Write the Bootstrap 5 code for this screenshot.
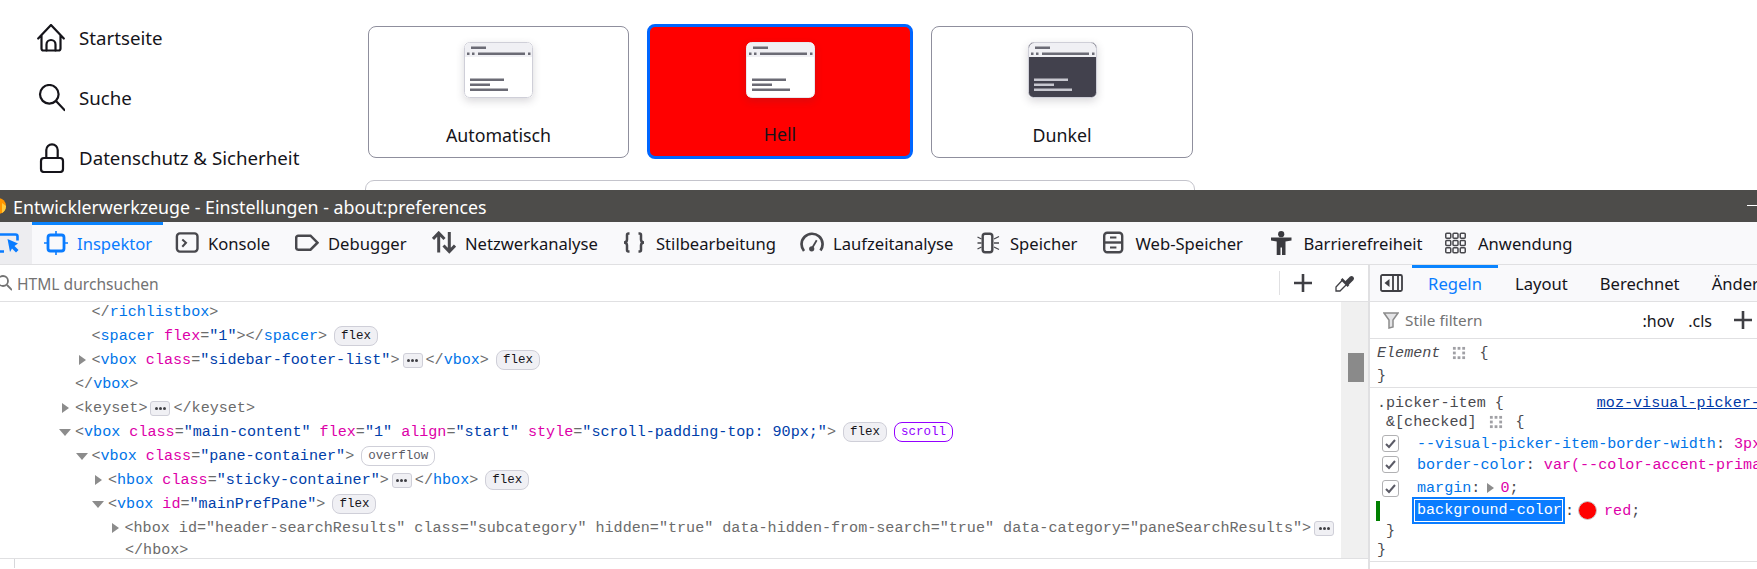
<!DOCTYPE html>
<html lang="de">
<head>
<meta charset="utf-8">
<title>Entwicklerwerkzeuge</title>
<link href="https://cdn.jsdelivr.net/npm/bootstrap@5.3.0/dist/css/bootstrap.min.css" rel="stylesheet">
<style>
html,body{height:569px;overflow:hidden;background:#fff}
body{font-family:"Noto Sans","Open Sans",sans-serif;color:#15141a}
.pref-area{height:190px;overflow:hidden}
.pref-side{width:365px;padding:8px 0 0 37px}
.pref-item{height:60px;gap:14px;font-size:18.700px;line-height:24px}
.pref-ico{width:28px;height:28px;flex:none}
.pref-ico.tall{height:30px}
.pref-main{width:830px}
.pick-row{gap:18px;padding:24px 0 0 3px;height:180px}
.pick-item{width:261px;height:132px;margin-top:2px;border:1px solid #8f8f9d;border-radius:8px;padding-top:15px;font-size:17.800px;background:#fff}
.pick-item.wide{width:262px}
.pick-item.on{width:266px;height:135px;margin-top:0;border:3px solid #0066ff;background:#f00;padding-top:15px}
.pick-item svg{width:69px;height:56px;display:block;border-radius:5px;box-shadow:0 3px 8px rgba(58,57,68,.2)}
.pick-label{margin-top:25px;line-height:24px}
.pick-item.on .pick-label{margin-top:24px}
.pref-next{height:40px;border:1px solid #c4c4cc;border-radius:9px}
.title-bar{height:32px;background:#4d4c4a;color:#fff;font-size:17.800px;padding:2px 0 0 13px;position:relative}
.ff-logo{position:absolute;left:-10px;top:8px;width:16px;height:16px}
.win-min{position:absolute;left:1747px;top:15px;width:10px;height:1px;background:#fff}
.tool-bar{height:43px;background:#f9f9fb;border-bottom:1px solid #e0e0e2;display:grid;grid-template-columns:32px 131px 120px 137px 191px 177px 177px 125.5px 168px 174.5px 150px;font-size:16.600px}
.tool-pick{background:#ededf0;overflow:hidden}
.tool-pick svg{width:24px;height:24px}
.tool-tab{padding-left:12px;gap:9px;color:#15141a;white-space:nowrap}
.tool-tab span{padding-top:2px}
.tool-tab svg{width:24px;height:24px;flex:none;fill:none;stroke:#48484d;stroke-width:2.4}
.tool-tab.on{color:#0a7cff;box-shadow:inset 0 3px 0 #0a84ff}
.tool-tab.on svg{stroke:#0a7cff}
.dev-body{height:304px}
.insp-left{width:1368px}
.search-line{height:37px;border-bottom:1px solid #e0e0e2;font-size:15.600px;color:#737373}
.search-line>span{padding-top:3px}
.search-line .glass{width:14px;height:16px;margin-left:-2px;margin-right:5px;flex:none}
.search-tools{margin-left:auto;height:24px;border-left:1px solid #e0e0e2;padding-left:13px;gap:22px;margin-right:13px}
.search-tools svg{width:20px;height:20px;fill:none;stroke:#3f3f44;stroke-width:2.6}
.mk-wrap{height:257px;border-bottom:1px solid #e0e0e2;overflow:hidden}
.mk-tree{flex:1;min-width:0;overflow:hidden;margin-top:-2px;font:15.100px/24px "Liberation Mono","DejaVu Sans Mono",monospace;color:#6b6b6b}
.mk-row{height:24px;white-space:pre}
.mk-row.cont{height:18px;line-height:18px;margin-top:1px;padding-left:125px}
.lv0{padding-left:59px}.lv1{padding-left:75.5px}.lv2{padding-left:92px}.lv3{padding-left:108.5px}
.tw-slot{width:16px;flex:none;display:flex;align-items:center}
.tw-r{width:0;height:0;border-left:7px solid #8c8c8c;border-top:5.5px solid transparent;border-bottom:5.5px solid transparent;margin-left:3px}
.tw-d{width:0;height:0;border-top:7px solid #8c8c8c;border-left:6px solid transparent;border-right:6px solid transparent}
.c-tag{color:#0074e8}.c-att{color:#dd00a9}.c-val{color:#003eaa}
.in-pill{display:inline-block;height:20px;line-height:18px;font-size:12.5px;padding:0 6px;border:1px solid #cfcfd8;background:#f0f0f4;border-radius:8px;color:#15141a;margin-left:7px}
.in-pill.plain{background:#fff;color:#5b5b66}
.in-pill.scrollp{background:#fff;border-color:#9400ff;color:#9400ff}
.in-more{display:inline-flex;align-items:center;justify-content:center;gap:1px;width:20px;height:15px;border:1px solid #cfcfd8;background:#f0f0f4;border-radius:3px;margin:0 3px}
.in-more i{width:3px;height:3px;border-radius:50%;background:#3f3f44}
.mk-scroll{width:27px;background:#f0f0f0;padding:51px 4px 0 7px;flex:none}
.mk-thumb{height:29px;background:#8a8a8a}
.crumb-line{height:9px;padding-left:14px}
.crumb-line div{width:1px;height:9px;background:#d7d7db}
.rule-pane{width:389px;border-left:2px solid #e0e0e2;overflow:hidden;flex:none}
.side-tabs{height:37px;background:#f9f9fb;border-bottom:1px solid #e0e0e2;font-size:16.600px;white-space:nowrap;overflow:hidden}
.side-toggle{width:23px;height:18px;margin-left:10px;margin-right:9px;flex:none}
.side-tab{height:36px;width:86px;flex:none;justify-content:center;padding-top:2px}
.side-tab.on{color:#0a7cff;box-shadow:inset 0 3px 0 #0a84ff}
.side-rest{margin-left:17px;gap:32px;flex:none;padding-top:2px}
.filter-line{height:37px;border-bottom:1px solid #e0e0e2;font-size:15.300px;color:#737373;padding-left:13px;white-space:nowrap}
.filter-line>svg{width:16px;height:17px;margin-right:6px;flex:none}
.filter-line>span{padding-top:1px}
.filter-btns{margin-left:auto;color:#15141a;font-size:16px;gap:14px;padding-right:4px}
.filter-btns span{padding-top:1px}
.filter-btns svg{width:20px;height:20px;margin-left:7px;fill:none;stroke:#3f3f44;stroke-width:2.6;flex:none}
.rule-code{font:15.100px/20px "Liberation Mono","DejaVu Sans Mono",monospace;color:#4a4a4f}
.rule-code span{white-space:pre}
.r-block{border-bottom:1px solid #e0e0e2;padding-left:7px}
.r-block.first{height:49px;padding-top:2px}
.r-block.first .r-row{height:23px}
.r-block.second{height:174px;padding-top:6px}
.r-row{display:flex;align-items:center;height:20px;white-space:nowrap}
.r-sel{font-style:italic}
.r-link{margin-left:93px;color:#0039a6;text-decoration:underline}
.r-dots{width:14px;height:14px;margin:0 13px 0 12px;flex:none}
.r-chk{width:17px;height:17px;border:1.5px solid #b1b1b3;border-radius:3px;flex:none;margin:0 18px 0 5px;display:flex;align-items:center;justify-content:center}
.r-chk svg{width:11px;height:11px;fill:none;stroke:#5b5b66;stroke-width:2}
.r-prop{color:#0074e8}.r-val{color:#dd00a9}
.r-green{width:4px;height:20px;background:#008000;margin:0 32px 0 -1px;flex:none}
.r-edit{background:#0a7cff;color:#fff;height:27px;width:153px;padding:2px;flex:none}
.r-edit span{display:block;border:1px solid #fff;height:23px;line-height:21px;padding-left:2px}
.r-dot{width:19px;height:19px;border-radius:50%;background:#f00;border:1px solid #ccc;margin:0 7px 0 4px;flex:none}
.ind1{padding-left:9px}
.r-top{height:18px}
.r-check{height:19px}
.r-first-decl{height:21px;margin-top:2px}
.r-mid{height:21px}
.r-margin{height:25px;padding-top:1px}
.r-tw{margin:0 6px 0 -2px}
</style>
</head>
<body class="m-0">
<div class="pref-area d-flex">
  <nav class="pref-side">
    <div class="pref-item d-flex align-items-center">
      <svg class="pref-ico" viewBox="0 0 28 28" fill="none" stroke="#15141a" stroke-width="2.200" stroke-linejoin="round" stroke-linecap="round"><path d="M1.200 14.500 14 1l12.800 13.500M4.500 11v13.500a2 2 0 0 0 2 2h15a2 2 0 0 0 2-2V11"/><path d="M9.500 26.500v-6a4.500 4.500 0 0 1 9 0v6"/></svg>
      <span>Startseite</span>
    </div>
    <div class="pref-item d-flex align-items-center">
      <svg class="pref-ico" viewBox="0 0 28 28" fill="none" stroke="#15141a" stroke-width="2.200" stroke-linecap="round"><circle cx="12.300" cy="10.300" r="9.300"/><path d="m19 17 8.500 9"/></svg>
      <span>Suche</span>
    </div>
    <div class="pref-item d-flex align-items-center">
      <svg class="pref-ico tall" viewBox="0 -1 28 30" fill="none" stroke="#15141a" stroke-width="2.200"><rect x="4" y="14" width="22" height="14" rx="3"/><path d="M9.300 14V6a5.700 5.700 0 0 1 11.400 0v8"/></svg>
      <span>Datenschutz &amp; Sicherheit</span>
    </div>
  </nav>
  <main class="pref-main">
    <div class="pick-row d-flex">
      <div class="pick-item d-flex flex-column align-items-center">
        <svg viewBox="0 0 69 56"><rect x=".5" y=".5" width="68" height="55" rx="5" fill="#fff" stroke="#cfcfd8"/><path d="M1 6a5 5 0 0 1 5-5h57a5 5 0 0 1 5 5v9H1z" fill="#f0f0f4"/><g fill="#6b6b75"><rect x="7" y="4.500" width="15" height="2.500"/><rect x="3" y="10.500" width="2.500" height="2.500"/><rect x="8" y="10.500" width="2.500" height="2.500"/><rect x="14" y="10.500" width="47" height="2.500"/><rect x="64" y="10.500" width="2.500" height="2.500"/><rect x="6" y="36.500" width="34" height="2.500"/><rect x="6" y="41.500" width="20" height="2.500"/><rect x="6" y="46.500" width="38" height="2.500"/></g></svg>
        <div class="pick-label">Automatisch</div>
      </div>
      <div class="pick-item on d-flex flex-column align-items-center">
        <svg viewBox="0 0 69 56"><rect x=".5" y=".5" width="68" height="55" rx="5" fill="#fff" stroke="#e8e8ee"/><path d="M1 6a5 5 0 0 1 5-5h57a5 5 0 0 1 5 5v9H1z" fill="#f0f0f4"/><g fill="#6b6b75"><rect x="7" y="4.500" width="15" height="2.500"/><rect x="3" y="10.500" width="2.500" height="2.500"/><rect x="8" y="10.500" width="2.500" height="2.500"/><rect x="14" y="10.500" width="47" height="2.500"/><rect x="64" y="10.500" width="2.500" height="2.500"/><rect x="6" y="36.500" width="34" height="2.500"/><rect x="6" y="41.500" width="20" height="2.500"/><rect x="6" y="46.500" width="38" height="2.500"/></g></svg>
        <div class="pick-label">Hell</div>
      </div>
      <div class="pick-item wide d-flex flex-column align-items-center">
        <svg viewBox="0 0 69 56"><rect x=".5" y=".5" width="68" height="55" rx="5" fill="#42414d" stroke="#cfcfd8"/><path d="M1 6a5 5 0 0 1 5-5h57a5 5 0 0 1 5 5v9H1z" fill="#f0f0f4"/><g fill="#6b6b75"><rect x="7" y="4.500" width="15" height="2.500"/><rect x="3" y="10.500" width="2.500" height="2.500"/><rect x="8" y="10.500" width="2.500" height="2.500"/><rect x="14" y="10.500" width="47" height="2.500"/><rect x="64" y="10.500" width="2.500" height="2.500"/></g><g fill="#c8c8d0"><rect x="6" y="36.500" width="34" height="2.500"/><rect x="6" y="41.500" width="20" height="2.500"/><rect x="6" y="46.500" width="38" height="2.500"/></g></svg>
        <div class="pick-label">Dunkel</div>
      </div>
    </div>
    <div class="pref-next"></div>
  </main>
</div>

<div class="title-bar d-flex align-items-center">
  <svg class="ff-logo" viewBox="0 0 16 16"><circle cx="8" cy="8" r="8" fill="#ff9500"/><path d="M16 8a8 8 0 0 1-4 7V5z" fill="#ffcb3d"/></svg>
  <span>Entwicklerwerkzeuge - Einstellungen - about:preferences</span>
  <div class="win-min"></div>
</div>

<div class="tool-bar">
  <div class="tool-pick d-flex align-items-center">
    <svg viewBox="0 0 24 24" fill="none" stroke="#0a7cff" stroke-width="2.600"><path d="M0 3.500h15.500a2 2 0 0 1 2 2v4M0 20.500h4"/><path d="M7.500 8 18 12.500 14.500 15l4 4-2.500 2.500-4-4L10 21z" fill="#0a7cff" stroke="none"/></svg>
  </div>
  <div class="tool-tab on d-flex align-items-center"><svg viewBox="0 0 24 24"><rect x="4" y="4" width="16" height="16" rx="2.500" stroke-width="2.800"/><path stroke-width="1.600" d="M12 0v4M12 20v4M0 12h4M20 12h4"/></svg><span>Inspektor</span></div>
  <div class="tool-tab d-flex align-items-center"><svg viewBox="0 0 24 24"><rect x="1.900" y="2.400" width="20.600" height="18.200" rx="3"/><path stroke-width="2" d="m7.300 8.500 3.700 3.300-3.700 4"/></svg><span>Konsole</span></div>
  <div class="tool-tab d-flex align-items-center"><svg viewBox="0 0 24 24"><path stroke-width="2.500" d="M1.200 6.700a2 2 0 0 1 2-2h12.300l7 7-7 7H3.200a2 2 0 0 1-2-2z"/></svg><span>Debugger</span></div>
  <div class="tool-tab d-flex align-items-center"><svg viewBox="0 0 24 24"><path stroke-width="3" d="M6.700 21.500V2M1 8l5.700-6 5.800 6M17.300 1v19M11.500 14.500l5.800 6 5.700-6"/></svg><span>Netzwerkanalyse</span></div>
  <div class="tool-tab d-flex align-items-center"><svg viewBox="0 0 24 24"><path stroke-width="2.500" d="M6.500 2.500h-1A1.500 1.500 0 0 0 4 4v4.500c0 1.500-1 3-3 3 2 0 3 1.500 3 3V19a1.500 1.500 0 0 0 1.500 1.500h1M15.500 2.500h1A1.500 1.500 0 0 1 18 4v4.500c0 1.500 1 3 3 3-2 0-3 1.500-3 3V19a1.500 1.500 0 0 1-1.500 1.500h-1"/></svg><span>Stilbearbeitung</span></div>
  <div class="tool-tab d-flex align-items-center"><svg viewBox="0 0 24 24"><path stroke-width="2.700" d="M4 20a10.500 10.500 0 1 1 16.500-.5"/><path stroke-width="1.800" d="m11.700 17.800 5-8.600"/><circle cx="11.700" cy="17.800" r="2.600" fill="#48484d" stroke="none"/></svg><span>Laufzeitanalyse</span></div>
  <div class="tool-tab d-flex align-items-center"><svg viewBox="0 0 24 24"><rect x="5.700" y="2.700" width="9.600" height="18.600" rx="2.500"/><path stroke-width="1.300" d="m.5 6 4 2M.5 12h4M.5 18l4-2M17 8l5-2.500M17 12h5M17 16l5 2.500"/></svg><span>Speicher</span></div>
  <div class="tool-tab d-flex align-items-center"><svg viewBox="0 0 24 24"><rect x="1.200" y="1.700" width="18" height="19.600" rx="3"/><path d="M1.200 11.500h18"/><path stroke-width="1.800" d="M7 6.500h6.400M7 16.500h6.400"/></svg><span>Web-Speicher</span></div>
  <div class="tool-tab d-flex align-items-center"><svg viewBox="0 0 24 24"><circle cx="10.200" cy="3.200" r="3.100" fill="#3a3a3f" stroke="none"/><path d="M0 6.500h20.500v3l-6 1V24H11v-7.500H9.500V24H5.700V10.500L0 9.500z" fill="#3a3a3f" stroke="none"/></svg><span>Barrierefreiheit</span></div>
  <div class="tool-tab d-flex align-items-center"><svg viewBox="0 0 24 24"><g stroke-width="1.500"><rect x=".75" y="2.250" width="5" height="5" rx="1"/><rect x="8" y="2.250" width="5" height="5" rx="1"/><rect x="15.250" y="2.250" width="5" height="5" rx="1"/><rect x=".75" y="9.500" width="5" height="5" rx="1"/><rect x="8" y="9.500" width="5" height="5" rx="1"/><rect x="15.250" y="9.500" width="5" height="5" rx="1"/><rect x=".75" y="16.750" width="5" height="5" rx="1"/><rect x="8" y="16.750" width="5" height="5" rx="1"/><rect x="15.250" y="16.750" width="5" height="5" rx="1"/></g></svg><span>Anwendung</span></div>
</div>

<div class="dev-body d-flex">
  <section class="insp-left">
    <div class="search-line d-flex align-items-center">
      <svg class="glass" viewBox="0 0 14 16" fill="none" stroke="#737373" stroke-width="1.800"><circle cx="5" cy="6" r="5"/><path d="m9 10 5 5"/></svg>
      <span>HTML durchsuchen</span>
      <div class="search-tools d-flex align-items-center">
        <svg viewBox="0 0 20 20"><path d="M10 1v18M1 10h18"/></svg>
        <svg viewBox="0 0 20 20"><path stroke-width="1.300" d="M8 6.500 1 14v4h4l7.500-7.500"/><path stroke-width="2.500" d="m6.500 6 7 7"/><path stroke="none" fill="#3f3f44" d="m10 8.500 5-5a2.500 2.500 0 0 1 3.500 3.500l-5 5z"/></svg>
      </div>
    </div>
    <div class="mk-wrap d-flex">
      <div class="mk-tree">
        <div class="mk-row lv1 d-flex"><span class="tw-slot"></span><span>&lt;/<span class="c-tag">richlistbox</span>&gt;</span></div>
        <div class="mk-row lv1 d-flex align-items-center"><span class="tw-slot"></span><span>&lt;<span class="c-tag">spacer</span> <span class="c-att">flex</span>=<span class="c-val">"1"</span>&gt;&lt;/<span class="c-tag">spacer</span>&gt;</span><span class="in-pill">flex</span></div>
        <div class="mk-row lv1 d-flex align-items-center"><span class="tw-slot"><i class="tw-r"></i></span><span>&lt;<span class="c-tag">vbox</span> <span class="c-att">class</span>=<span class="c-val">"sidebar-footer-list"</span>&gt;</span><span class="in-more"><i></i><i></i><i></i></span><span>&lt;/<span class="c-tag">vbox</span>&gt;</span><span class="in-pill">flex</span></div>
        <div class="mk-row lv0 d-flex"><span class="tw-slot"></span><span>&lt;/<span class="c-tag">vbox</span>&gt;</span></div>
        <div class="mk-row lv0 d-flex align-items-center"><span class="tw-slot"><i class="tw-r"></i></span><span>&lt;keyset&gt;</span><span class="in-more"><i></i><i></i><i></i></span><span>&lt;/keyset&gt;</span></div>
        <div class="mk-row lv0 d-flex align-items-center"><span class="tw-slot"><i class="tw-d"></i></span><span>&lt;<span class="c-tag">vbox</span> <span class="c-att">class</span>=<span class="c-val">"main-content"</span> <span class="c-att">flex</span>=<span class="c-val">"1"</span> <span class="c-att">align</span>=<span class="c-val">"start"</span> <span class="c-att">style</span>=<span class="c-val">"scroll-padding-top: 90px;"</span>&gt;</span><span class="in-pill">flex</span><span class="in-pill scrollp">scroll</span></div>
        <div class="mk-row lv1 d-flex align-items-center"><span class="tw-slot"><i class="tw-d"></i></span><span>&lt;<span class="c-tag">vbox</span> <span class="c-att">class</span>=<span class="c-val">"pane-container"</span>&gt;</span><span class="in-pill plain">overflow</span></div>
        <div class="mk-row lv2 d-flex align-items-center"><span class="tw-slot"><i class="tw-r"></i></span><span>&lt;<span class="c-tag">hbox</span> <span class="c-att">class</span>=<span class="c-val">"sticky-container"</span>&gt;</span><span class="in-more"><i></i><i></i><i></i></span><span>&lt;/<span class="c-tag">hbox</span>&gt;</span><span class="in-pill">flex</span></div>
        <div class="mk-row lv2 d-flex align-items-center"><span class="tw-slot"><i class="tw-d"></i></span><span>&lt;<span class="c-tag">vbox</span> <span class="c-att">id</span>=<span class="c-val">"mainPrefPane"</span>&gt;</span><span class="in-pill">flex</span></div>
        <div class="mk-row lv3 d-flex align-items-center"><span class="tw-slot"><i class="tw-r"></i></span><span>&lt;hbox id="header-searchResults" class="subcategory" hidden="true" data-hidden-from-search="true" data-category="paneSearchResults"&gt;</span><span class="in-more"><i></i><i></i><i></i></span></div>
        <div class="mk-row cont">&lt;/hbox&gt;</div>
      </div>
      <div class="mk-scroll"><div class="mk-thumb"></div></div>
    </div>
    <div class="crumb-line"><div></div></div>
  </section>
  <aside class="rule-pane">
    <div class="side-tabs d-flex align-items-center">
      <svg class="side-toggle" viewBox="0 0 23 18" fill="none" stroke="#3f3f44" stroke-width="1.800"><rect x="1" y="1" width="21" height="16" rx="1.500"/><path d="M13 1v16M18 1v16"/><path d="M9.500 5v8L4.500 9z" fill="#3f3f44" stroke="none"/></svg>
      <div class="side-tab on d-flex align-items-center">Regeln</div>
      <div class="side-rest d-flex"><span>Layout</span><span>Berechnet</span><span>Änderungen</span></div>
    </div>
    <div class="filter-line d-flex align-items-center">
      <svg viewBox="0 0 16 17" fill="#e4e4e6" stroke="#8c8c8c" stroke-width="1.500"><path d="M1 1h14L10 8v7l-4 1V8z"/></svg>
      <span>Stile filtern</span>
      <div class="filter-btns d-flex align-items-center"><span>:hov</span><span>.cls</span><svg viewBox="0 0 20 20"><path d="M10 1v18M1 10h18"/></svg></div>
    </div>
    <div class="rule-code">
      <div class="r-block first">
        <div class="r-row"><span class="r-sel">Element</span><svg class="r-dots" viewBox="0 0 15 15" fill="#a0a0a5"><rect x="1" y="1" width="3" height="3"/><rect x="6" y="1" width="3" height="3"/><rect x="11" y="1" width="3" height="3"/><rect x="1" y="6" width="3" height="3"/><rect x="11" y="6" width="3" height="3"/><rect x="1" y="11" width="3" height="3"/><rect x="6" y="11" width="3" height="3"/><rect x="11" y="11" width="3" height="3"/></svg><span>{</span></div>
        <div class="r-row"><span>}</span></div>
      </div>
      <div class="r-block second">
        <div class="r-row r-top"><span>.picker-item {</span><span class="r-link">moz-visual-picker-item.css:1</span></div>
        <div class="r-row ind1 r-check"><span>&amp;[checked]</span><svg class="r-dots" viewBox="0 0 15 15" fill="#a0a0a5"><rect x="1" y="1" width="3" height="3"/><rect x="6" y="1" width="3" height="3"/><rect x="11" y="1" width="3" height="3"/><rect x="1" y="6" width="3" height="3"/><rect x="11" y="6" width="3" height="3"/><rect x="1" y="11" width="3" height="3"/><rect x="6" y="11" width="3" height="3"/><rect x="11" y="11" width="3" height="3"/></svg><span>{</span></div>
        <div class="r-row r-first-decl"><span class="r-chk"><svg viewBox="0 0 11 11"><path d="m1 6 3 3 6-7"/></svg></span><span><span class="r-prop">--visual-picker-item-border-width</span>: <span class="r-val">3px</span>;</span></div>
        <div class="r-row r-mid"><span class="r-chk"><svg viewBox="0 0 11 11"><path d="m1 6 3 3 6-7"/></svg></span><span><span class="r-prop">border-color</span>: <span class="r-val">var(--color-accent-primary)</span>;</span></div>
        <div class="r-row r-margin"><span class="r-chk"><svg viewBox="0 0 11 11"><path d="m1 6 3 3 6-7"/></svg></span><span class="r-prop">margin</span><span>: </span><i class="tw-r r-tw"></i><span class="r-val">0</span><span>;</span></div>
        <div class="r-row r-mid"><span class="r-green"></span><span class="r-edit"><span>background-color</span></span><span>:</span><span class="r-dot"></span><span class="r-val">red</span><span>;</span></div>
        <div class="r-row ind1"><span>}</span></div>
        <div class="r-row r-top"><span>}</span></div>
      </div>
    </div>
  </aside>
</div>
<script src="https://cdn.jsdelivr.net/npm/bootstrap@5.3.0/dist/js/bootstrap.bundle.min.js"></script>
</body>
</html>
